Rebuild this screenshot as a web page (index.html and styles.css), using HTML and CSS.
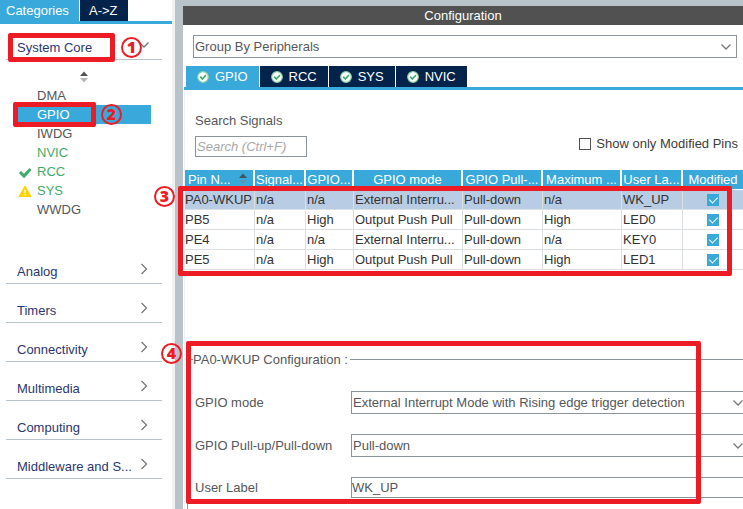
FILE: index.html
```html
<!DOCTYPE html>
<html lang="en">
<head>
<meta charset="utf-8">
<title>Pinout &amp; Configuration</title>
<link rel="stylesheet" href="styles.css">
</head>
<body>
<svg class="defs" aria-hidden="true">
  <symbol id="down" viewBox="0 0 12 12"><path d="M1.500 3.500 6 8l4.500-4.500" fill="none" stroke="currentColor" stroke-width="1.300"/></symbol>
  <symbol id="right" viewBox="0 0 12 12"><path d="M3.500 1 8.500 6l-5 5" fill="none" stroke="currentColor" stroke-width="1.300"/></symbol>
  <symbol id="sort" viewBox="0 0 10 12"><path d="M1 5 5 0.500 9 5z" fill="#555"/><path d="M1 7h8L5 11.500z" fill="#b4b4b4"/></symbol>
  <symbol id="sort-head" viewBox="0 0 10 12"><path d="M1 5 5 0.500 9 5z" fill="#45535c"/><path d="M1 7h8L5 11.500z" fill="#5c95b4"/></symbol>
  <symbol id="ok" viewBox="0 0 12 12"><circle cx="6" cy="6" r="5.300" fill="#fff" stroke="#8fd0a4" stroke-width="1.200"/><path d="M3.200 5.700 5.400 8l3.500-4" fill="none" stroke="#3fab68" stroke-width="1.700"/></symbol>
</svg>
<div class="app">
  <aside class="sidebar">
    <div class="tabs side-tabs">
      <button class="tab active" type="button">Categories</button>
      <button class="tab" type="button">A-&gt;Z</button>
    </div>
    <nav class="categories">
      <button class="category open" type="button"><span>System Core</span><svg class="chev"><use href="#down"/></svg></button>
      <div class="group">
        <svg class="sorter"><use href="#sort"/></svg>
        <ul>
          <li><i></i><a href="#">DMA</a></li>
          <li class="selected"><i></i><a href="#">GPIO</a></li>
          <li><i></i><a href="#">IWDG</a></li>
          <li class="on"><i></i><a href="#">NVIC</a></li>
          <li class="on"><i><svg viewBox="0 0 14 14"><path d="M2 7l4 4 6.500-7" fill="none" stroke="#3fab68" stroke-width="3"/></svg></i><a href="#">RCC</a></li>
          <li class="on"><i><svg viewBox="0 0 14 14"><path d="M7 2 13 12.500H1z" fill="#ffd200" stroke="#ffd200" stroke-linejoin="round"/><path d="M7 5.500v3.500M7 10.300v1.300" stroke="#fff" stroke-width="1.300"/></svg></i><a href="#">SYS</a></li>
          <li><i></i><a href="#">WWDG</a></li>
        </ul>
      </div>
      <button class="category" type="button"><span>Analog</span><svg class="chev"><use href="#right"/></svg></button>
      <button class="category" type="button"><span>Timers</span><svg class="chev"><use href="#right"/></svg></button>
      <button class="category" type="button"><span>Connectivity</span><svg class="chev"><use href="#right"/></svg></button>
      <button class="category" type="button"><span>Multimedia</span><svg class="chev"><use href="#right"/></svg></button>
      <button class="category" type="button"><span>Computing</span><svg class="chev"><use href="#right"/></svg></button>
      <button class="category" type="button"><span>Middleware and S...</span><svg class="chev"><use href="#right"/></svg></button>
    </nav>
  </aside>
  <main class="main">
    <h1>Configuration</h1>
    <div class="picker grouping">
      <select aria-label="Grouping"><option>Group By Peripherals</option></select>
      <svg class="arrow"><use href="#down"/></svg>
    </div>
    <div class="tabs main-tabs">
      <button class="tab active" type="button"><svg><use href="#ok"/></svg>GPIO</button>
      <button class="tab" type="button"><svg><use href="#ok"/></svg>RCC</button>
      <button class="tab" type="button"><svg><use href="#ok"/></svg>SYS</button>
      <button class="tab" type="button"><svg><use href="#ok"/></svg>NVIC</button>
    </div>
    <section class="panel">
      <div class="filters">
        <div class="search">
          <label for="search">Search Signals</label>
          <input id="search" type="text" placeholder="Search (Ctrl+F)">
        </div>
        <div class="only">
          <input id="only" class="box" type="checkbox"><label for="only">Show only Modified Pins</label>
        </div>
      </div>
      <table>
        <colgroup><col class="c-pin"><col class="c-signal"><col class="c-level"><col class="c-mode"><col class="c-pull"><col class="c-speed"><col class="c-label"><col></colgroup>
        <thead><tr><th><div class="sorted"><span>Pin N...</span><svg><use href="#sort-head"/></svg></div></th><th>Signal...</th><th>GPIO...</th><th>GPIO mode</th><th>GPIO Pull-...</th><th>Maximum ...</th><th>User La...</th><th>Modified</th></tr></thead>
        <tbody>
          <tr class="current"><td>PA0-WKUP</td><td>n/a</td><td>n/a</td><td>External Interru...</td><td>Pull-down</td><td>n/a</td><td>WK_UP</td><td><input class="box" type="checkbox" checked aria-label="PA0-WKUP modified"></td></tr>
          <tr><td>PB5</td><td>n/a</td><td>High</td><td>Output Push Pull</td><td>Pull-down</td><td>High</td><td>LED0</td><td><input class="box" type="checkbox" checked aria-label="PB5 modified"></td></tr>
          <tr><td>PE4</td><td>n/a</td><td>n/a</td><td>External Interru...</td><td>Pull-down</td><td>n/a</td><td>KEY0</td><td><input class="box" type="checkbox" checked aria-label="PE4 modified"></td></tr>
          <tr><td>PE5</td><td>n/a</td><td>High</td><td>Output Push Pull</td><td>Pull-down</td><td>High</td><td>LED1</td><td><input class="box" type="checkbox" checked aria-label="PE5 modified"></td></tr>
        </tbody>
      </table>
      <fieldset>
        <legend>PA0-WKUP Configuration :</legend>
        <div class="field"><label for="mode">GPIO mode</label>
          <div class="picker"><select id="mode"><option>External Interrupt Mode with Rising edge trigger detection</option></select><svg class="arrow"><use href="#down"/></svg></div></div>
        <div class="field"><label for="pull">GPIO Pull-up/Pull-down</label>
          <div class="picker"><select id="pull"><option>Pull-down</option></select><svg class="arrow"><use href="#down"/></svg></div></div>
        <div class="field"><label for="label">User Label</label>
          <input id="label" type="text" value="WK_UP"></div>
      </fieldset>
    </section>
  </main>
  <div class="mark mark-core"></div><div class="num num-core">1</div>
  <div class="mark mark-gpio"></div><div class="num num-gpio">2</div>
  <div class="mark mark-table"></div><div class="num num-table">3</div>
  <div class="mark mark-form"></div><div class="num num-form">4</div>
</div>
</body>
</html>
```
FILE: styles.css
```css
* { box-sizing: border-box; }

body {
  margin: 0;
  background: #fff;
  color: #555759;
  font: 13px/19px "Liberation Sans", Arial, sans-serif;
}

button, input, select { font: inherit; color: inherit; margin: 0; }
button { border: 0; background: none; padding: 0; text-align: left; }
a { color: inherit; text-decoration: none; }
svg { display: block; flex: none; }
.defs { position: absolute; width: 0; height: 0; }

.app {
  position: relative;
  display: grid;
  grid-template-columns: 175px minmax(0, 1fr);
  min-height: 100vh;
  overflow: hidden;
}

/* Tabs */
.tabs { display: flex; gap: 1px; border-bottom: 3px solid #39a9dc; }
.tab {
  display: flex;
  align-items: center;
  height: 21px;
  background: #03234b;
  color: #fff;
}
.tab.active { background: #39a9dc; }

/* Sidebar */
.sidebar { border-right: 3px solid #f0f1f3; }
.side-tabs .tab { width: 48px; padding-left: 9px; }
.side-tabs .tab.active { width: 79px; padding-left: 6px; }
.categories { padding: 11px 10px 0 6px; }
.category {
  display: flex;
  align-items: flex-end;
  justify-content: space-between;
  width: 100%;
  height: 39px;
  padding: 0 12px 2px 11px;
  border-bottom: 1px solid #b9c4ca;
  color: #2b3672;
}
.category span { white-space: nowrap; }
.category.open { height: 25px; }
.chev { width: 12px; height: 12px; margin-bottom: 6px; color: #777; }
.group { height: 185px; padding-top: 11px; }
.sorter { width: 10px; height: 12px; margin: 0 auto; }
ul { list-style: none; margin: 3px 11px 0 7px; padding: 0; }
li { display: flex; align-items: center; height: 19px; }
li i { width: 24px; padding-left: 5px; }
li svg { width: 14px; height: 14px; }
.selected { background: #39a9dc; color: #fff; }
.on { color: #3fab68; }

/* Main pane */
.main {
  border-top: 6px solid #b9c4ca;
  border-left: 8px solid #b9c4ca;
  overflow: hidden;
}
h1 {
  margin: 0;
  background: #505150;
  color: #fff;
  font-size: 13px;
  font-weight: 400;
  line-height: 19px;
  text-align: center;
}
.picker { position: relative; }
.picker select, .search input, .field > input {
  display: block;
  width: 100%;
  height: 23px;
  padding: 0 1px;
  border: 1px solid #8c9399;
  border-radius: 0;
  background: #fff;
  appearance: none;
  outline: 0;
}
.arrow { position: absolute; right: 5px; top: 6px; width: 12px; height: 12px; color: #777; pointer-events: none; }
.grouping { margin: 10px 6px 8px 10px; }
.main-tabs { margin-left: 1px; padding-left: 2px; }
.main-tabs .tab { gap: 6px; padding: 0 11px; }
.main-tabs svg { width: 12px; height: 12px; }

.panel { margin-left: 1px; border-left: 1px solid #f0f1f3; padding-top: 21px; }
.filters { display: flex; justify-content: space-between; align-items: flex-end; padding: 0 5px 13px 10px; }
.search label { display: block; margin-bottom: 6px; }
.search input { width: 112px; height: 21px; }
.search input::placeholder { color: #a8a8a8; font-style: italic; opacity: 1; }
.only { display: flex; align-items: center; gap: 5px; padding-bottom: 4px; color: #3c3c3c; }
.box {
  display: block;
  position: relative;
  width: 12px;
  height: 12px;
  border: 1px solid #505050;
  background: #fff;
  appearance: none;
}
.box:checked { border-color: #39a9dc; background: #39a9dc; }
.box:checked::after {
  content: "";
  position: absolute;
  left: 3px;
  top: 0;
  width: 4px;
  height: 7px;
  border: solid #fff;
  border-width: 0 1px 1px 0;
  transform: rotate(45deg);
}

/* Pin table */
table { width: 100%; table-layout: fixed; border-collapse: separate; border-spacing: 0; color: #333; }
.c-pin { width: 70px; }
.c-signal { width: 51px; }
.c-level { width: 48px; }
.c-mode { width: 109px; }
.c-pull { width: 80px; }
.c-speed { width: 79px; }
.c-label { width: 61px; }
th, td { height: 20px; padding: 0 1px; white-space: nowrap; text-align: left; }
th {
  border-right: 2px solid #fff;
  border-bottom: 1px solid #fff;
  background: #39a9dc;
  color: #fff;
  font-weight: 400;
  text-align: center;
}
td { border-right: 1px solid #dcdfe2; border-bottom: 1px solid #dcdfe2; }
th:last-child, td:last-child { border-right: 0; }
td:first-child { padding: 0; }
.sorted { display: flex; justify-content: space-between; padding: 0 4px 0 2px; }
.sorted svg { width: 10px; height: 12px; margin-top: 3px; }
.current { background: #b8cce4; }
td .box { margin: 0 auto; }

/* Pin form */
fieldset {
  min-width: 0;
  margin: 80px -7px -40px 2px;
  padding: 22px 0 52px 7px;
  border: 1px solid #8c9399;
}
legend { margin-left: -2px; padding: 0 2px 0 0; }
.field { display: grid; grid-template-columns: 156px minmax(0, 1fr); align-items: center; margin-bottom: 20px; }
.field > input { height: 21px; padding: 0; }

/* Callouts */
.mark { position: absolute; border: 5px solid #ed1c24; border-radius: 2px; pointer-events: none; }
.mark-core { left: 8px; top: 33px; width: 107px; height: 29px; }
.mark-gpio { left: 13px; top: 102px; width: 83px; height: 25px; }
.mark-table { left: 178px; top: 186px; width: 554px; height: 90px; }
.mark-form { left: 186px; top: 341px; width: 515px; height: 163px; }
.num {
  position: absolute;
  width: 21px;
  height: 21px;
  border: 2px solid #ed1c24;
  border-radius: 50%;
  color: #ed1c24;
  font: 800 16px/17px "Open Sans", "Noto Sans", sans-serif;
  text-align: center;
}
.num-core { left: 121px; top: 37px; }
.num-gpio { left: 101px; top: 104px; }
.num-table { left: 154px; top: 186px; }
.num-form { left: 161px; top: 343px; }
```
